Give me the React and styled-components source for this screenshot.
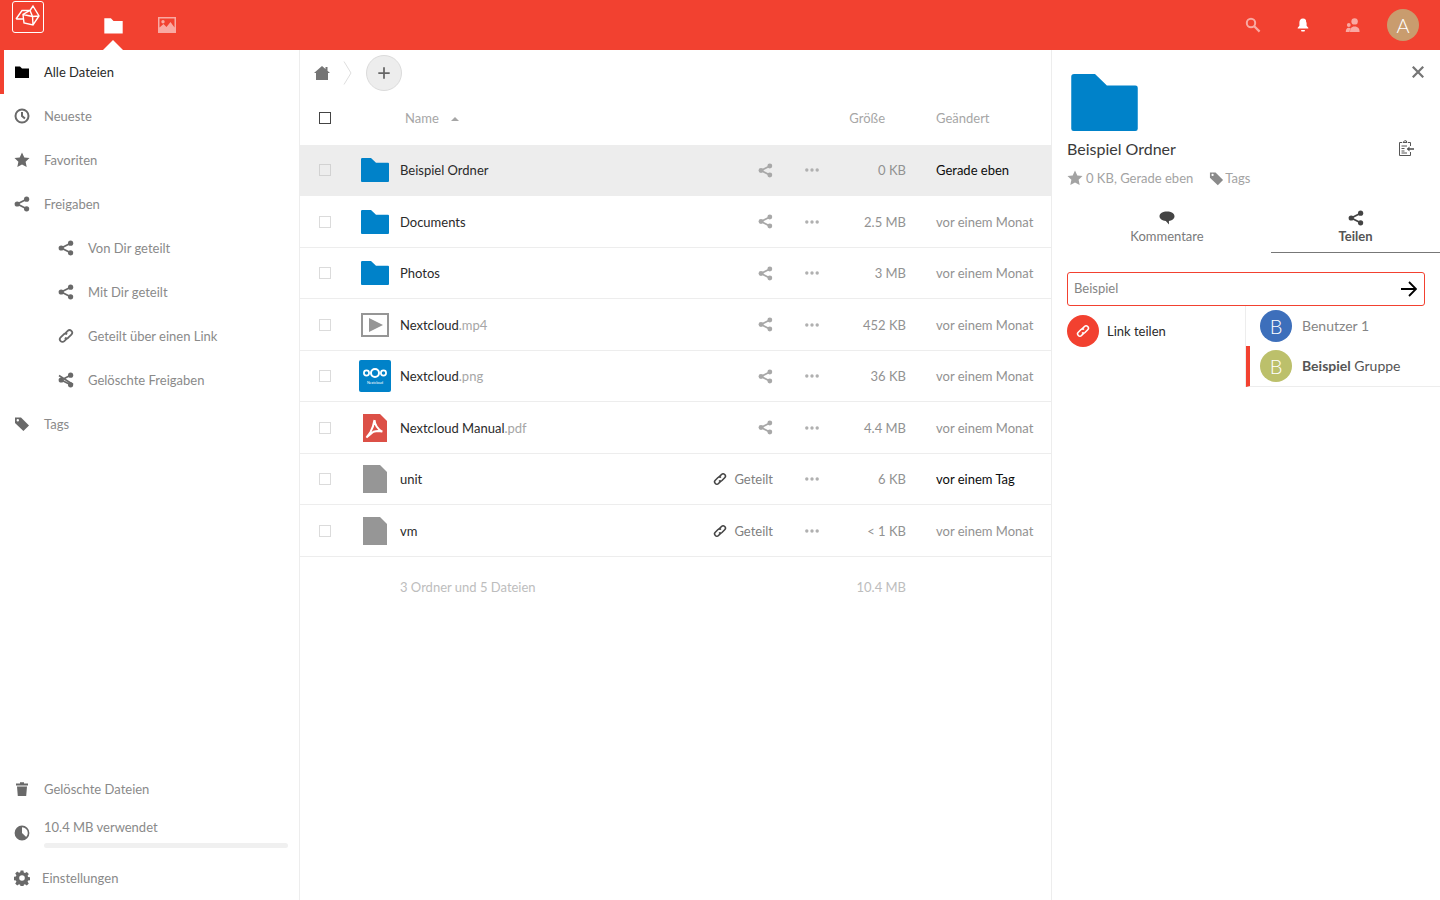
import React from "react";
import styled, { createGlobalStyle } from "styled-components";

const RED = "#f24130";

const Global = createGlobalStyle`
  html, body {
    margin: 0;
    padding: 0;
    background: #fff;
  }
  body {
    font-family: "Lato", "Noto Sans", sans-serif;
    font-size: 13px;
    color: #2a2a2a;
  }
  * {
    box-sizing: border-box;
  }
`;

const Page = styled.div`
  width: 1440px;
  height: 900px;
  display: flex;
  flex-direction: column;
  overflow: hidden;
`;

/* header */
const Header = styled.header`
  height: 50px;
  flex: none;
  background: ${RED};
  display: flex;
  align-items: flex-start;
  padding-left: 12px;
`;
const Logo = styled.div`
  width: 32px;
  height: 32px;
  margin-top: 1px;
  border: 1px solid #fff;
  border-radius: 3px;
  color: #fff;
  display: flex;
`;
const AppNav = styled.nav`
  display: flex;
  margin-left: 44px;
  gap: 4px;
`;
const AppLink = styled.div`
  position: relative;
  width: 50px;
  height: 50px;
  display: flex;
  align-items: center;
  justify-content: center;
  color: #fff;
  opacity: ${(p) => (p.$active ? 1 : 0.55)};
  ${(p) =>
    p.$active &&
    `&:after {
      content: "";
      position: absolute;
      left: 15px;
      bottom: 0;
      border: 10px solid transparent;
      border-top: 0;
      border-bottom-color: #fff;
    }`}
`;
const HeaderRight = styled.div`
  margin-left: auto;
  display: flex;
  align-items: center;
  height: 50px;
  padding-right: 21px;
`;
const HeaderIcon = styled.div`
  position: relative;
  width: 50px;
  display: flex;
  justify-content: center;
  color: #fff;
  opacity: ${(p) => (p.$dim ? 0.55 : 1)};
`;
const BellDot = styled.span`
  position: absolute;
  top: 1px;
  left: 28px;
  width: 5px;
  height: 5px;
  border-radius: 50%;
  background: ${RED};
`;
const Avatar = styled.div`
  width: 32px;
  height: 32px;
  flex: none;
  border-radius: 50%;
  background: ${(p) => p.$bg};
  color: #fff;
  font-size: 20px;
  font-weight: 300;
  display: flex;
  align-items: center;
  justify-content: center;
`;
const HeaderAvatar = styled(Avatar)`
  margin-left: 9px;
`;

/* layout */
const Body = styled.div`
  flex: 1;
  display: flex;
  min-height: 0;
`;

/* sidebar */
const Sidebar = styled.aside`
  width: 300px;
  flex: none;
  border-right: 1px solid #ededed;
  display: flex;
  flex-direction: column;
  justify-content: space-between;
`;
const NavList = styled.div`
  display: flex;
  flex-direction: column;
`;
const NavItem = styled.div`
  height: 44px;
  display: flex;
  align-items: center;
  padding-left: ${(p) => (p.$active ? 10 : p.$sub ? 58 : 14)}px;
  gap: 14px;
  color: ${(p) => (p.$active ? "#2a2a2a" : "#8a8a8a")};
  border-left: ${(p) => (p.$active ? `4px solid ${RED}` : "0")};
`;
const NavLabel = styled.span`
  padding-bottom: 1px;
`;
const NavIcon = styled.span`
  width: 16px;
  height: 16px;
  flex: none;
  display: flex;
  color: ${(p) => (p.$active ? "#000" : "#696969")};
`;
const SideFooter = styled.div`
  display: flex;
  flex-direction: column;
`;
const StorageRow = styled.div`
  display: flex;
  align-items: center;
  gap: 14px;
  padding: 0 11px 0 14px;
  height: 44px;
`;
const StorageText = styled.div`
  flex: 1;
  color: #8a8a8a;
  display: flex;
  flex-direction: column;
  gap: 8px;
`;
const Progress = styled.div`
  height: 5px;
  background: #f0f0f0;
  border-radius: 3px;
`;
const SettingsItem = styled(NavItem)`
  gap: 12px;
  height: 45px;
`;

/* files */
const Main = styled.main`
  flex: 1;
  min-width: 0;
  display: flex;
  flex-direction: column;
`;
const Crumbs = styled.div`
  height: 46px;
  flex: none;
  display: flex;
  align-items: center;
  padding-left: 14px;
  color: #757575;
`;
const CrumbSep = styled.span`
  display: flex;
  margin-left: 13px;
  margin-right: 14px;
`;
const AddButton = styled.div`
  width: 36px;
  height: 36px;
  border-radius: 50%;
  background: #ededed;
  border: 1px solid #dbdbdb;
  color: #666;
  display: flex;
  align-items: center;
  justify-content: center;
`;
const Grid = styled.div`
  display: grid;
  grid-template-columns: 50px 50px 1fr 89px 46px 71px 145px;
  align-items: center;
`;
const TableHead = styled(Grid)`
  height: 48.5px;
  flex: none;
  color: #a6a6a6;
  padding-bottom: 4px;
`;
const HeadName = styled.div`
  padding-left: 5px;
  display: flex;
  align-items: center;
  gap: 12px;
`;
const SortArrow = styled.span`
  width: 0;
  height: 0;
  margin-top: 2px;
  border: 4px solid transparent;
  border-top: 0;
  border-bottom: 4px solid #a6a6a6;
`;
const HeadSize = styled.div`
  grid-column: 5 / span 2;
  padding-right: 21px;
  text-align: right;
`;
const HeadDate = styled.div`
  padding-left: 30px;
`;
const Check = styled.span`
  justify-self: center;
  width: 12px;
  height: 12px;
  border: 1px solid ${(p) => (p.$dark ? "#444" : p.$sel ? "#d2d2d2" : "#dbdbdb")};
  background: ${(p) => (p.$sel ? "#ededed" : "#fff")};
`;
const Row = styled(Grid)`
  height: 51.5px;
  padding-top: 1px;
  border-bottom: 1px solid #ededed;
  background: ${(p) => (p.$selected ? "#ededed" : "#fff")};
`;
const FileIcon = styled.span`
  justify-self: center;
  display: flex;
`;
const FileName = styled.div`
  color: #2a2a2a;
`;
const Ext = styled.span`
  color: #a6a6a6;
`;
const ShareCell = styled.div`
  display: flex;
  justify-content: flex-end;
  align-items: center;
  padding-right: 16px;
  color: #a8a8a8;
`;
const SharedLabel = styled.div`
  display: flex;
  align-items: center;
  gap: 7px;
  color: #808080;
`;
const LinkGlyph = styled.span`
  display: flex;
  color: #444;
`;
const DotsCell = styled.div`
  display: flex;
  justify-content: center;
  color: #b0b0b0;
`;
const SizeCell = styled.div`
  text-align: right;
  color: #929292;
`;
const DateCell = styled.div`
  padding-left: 30px;
  white-space: nowrap;
  color: ${(p) => (p.$recent ? "#0c0c0c" : "#929292")};
`;
const Summary = styled(Grid)`
  height: 60px;
  color: #bdbdbd;
`;
const SummaryName = styled.div`
  grid-column: 3 / span 3;
`;
const SummarySize = styled.div`
  text-align: right;
`;

/* details panel */
const Detail = styled.section`
  width: 389px;
  flex: none;
  border-left: 1px solid #ededed;
  display: flex;
  flex-direction: column;
  position: relative;
`;
const CloseButton = styled.div`
  position: absolute;
  top: 16px;
  right: 16px;
  display: flex;
  color: #757575;
`;
const DetailHead = styled.div`
  padding: 24px 15px 0;
  display: flex;
  flex-direction: column;
`;
const BigFolder = styled.div`
  display: flex;
  padding-left: 4px;
  height: 60px;
`;
const TitleRow = styled.div`
  display: flex;
  align-items: center;
  justify-content: space-between;
  margin-top: 4px;
  height: 20px;
  font-size: 16px;
  color: #3a3a3a;
  padding-right: 11px;
`;
const ClipIcon = styled.span`
  display: flex;
  margin-top: -1px;
  color: #555;
`;
const MetaRow = styled.div`
  display: flex;
  align-items: center;
  height: 20px;
  margin-top: 10px;
  color: #a3a3a3;
`;
const MetaText = styled.span`
  margin-left: 3px;
`;
const MetaTag = styled.span`
  display: flex;
  margin-left: 16px;
  margin-right: 1px;
  color: #8a8a8a;
`;
const MetaStar = styled.span`
  display: flex;
  color: #a3a3a3;
`;
const Tabs = styled.div`
  display: flex;
  margin: 21px 0 0 11px;
  height: 44px;
`;
const Tab = styled.div`
  flex: ${(p) => (p.$active ? "0 0 169px" : "0 0 208px")};
  display: flex;
  flex-direction: column;
  align-items: center;
  gap: 2px;
  padding-top: 1px;
  color: ${(p) => (p.$active ? "#555" : "#7a7a7a")};
  font-weight: ${(p) => (p.$active ? 700 : 400)};
  border-bottom: ${(p) => (p.$active ? "1px solid #777" : "0")};
`;
const TabIcon = styled.span`
  display: flex;
  color: #444;
`;
const SearchBox = styled.div`
  margin: 19px 15px 0;
  height: 34px;
  flex: none;
  border: 1px solid ${RED};
  border-radius: 3px;
  display: flex;
  align-items: center;
  justify-content: space-between;
  padding: 0 7px 0 6px;
  color: #858585;
`;
const SearchText = styled.span`
  padding-bottom: 2px;
`;
const ArrowIcon = styled.span`
  display: flex;
  color: #000;
`;
const ShareArea = styled.div`
  display: flex;
  align-items: flex-start;
`;
const LinkShare = styled.div`
  width: 193px;
  flex: none;
  padding: 9px 0 0 15px;
  display: flex;
  align-items: center;
  gap: 8px;
  color: #2a2a2a;
`;
const Suggest = styled.div`
  flex: 1;
  display: flex;
  flex-direction: column;
  border-left: 1px solid #ededed;
`;
const SuggestItem = styled.div`
  height: ${(p) => (p.$active ? 41 : 40)}px;
  display: flex;
  align-items: center;
  padding-left: ${(p) => (p.$active ? 10 : 14)}px;
  gap: 10px;
  font-size: 14px;
  color: ${(p) => (p.$active ? "#555" : "#858585")};
  border-left: ${(p) => (p.$active ? `4px solid ${RED}` : "0")};
  border-bottom: ${(p) => (p.$active ? "1px solid #ededed" : "0")};
`;
const SuggestText = styled.span`
  padding-bottom: 2px;
`;
const Bold = styled.b`
  font-weight: 700;
`;

/* icons */
const Svg = ({ size = 16, h, children }) => (
  <svg width={size} height={h || size} viewBox="0 0 16 16" fill="currentColor">
    {children}
  </svg>
);
const FolderIcon = ({ size, h }) => (
  <Svg size={size} h={h}>
    <path d="M1 2.500h5l2 2h7v9.500H1z" />
  </Svg>
);
const ClockIcon = () => (
  <Svg>
    <path
      fillRule="evenodd"
      d="M8 .5a7.500 7.500 0 1 0 0 15a7.500 7.500 0 0 0 0-15zM8 2.500a5.500 5.500 0 1 1 0 11a5.500 5.500 0 0 1 0-11z"
    />
    <path d="M7 4h2v3.600l2.600 2.200-1.300 1.400L7 8.600z" />
  </Svg>
);
const StarIcon = ({ size }) => (
  <Svg size={size}>
    <path d="M8 .5l2.300 5 5.200.6-3.900 3.600 1.100 5.400L8 12.400l-4.700 2.700 1.100-5.400L.5 6.100l5.200-.6z" />
  </Svg>
);
const ShareIcon = ({ size }) => (
  <Svg size={size}>
    <circle cx="12.600" cy="3.200" r="2.600" />
    <circle cx="3.200" cy="8" r="2.600" />
    <circle cx="12.600" cy="12.800" r="2.600" />
    <path d="M3.200 8l9.400-4.800M3.200 8l9.400 4.800" stroke="currentColor" strokeWidth="1.800" fill="none" />
  </Svg>
);
const LinkIcon = ({ size, stroke = 1.8 }) => (
  <Svg size={size}>
    <g fill="none" stroke="currentColor" strokeWidth={stroke} transform="rotate(-45 8 8)">
      <path d="M7 10.400H3.200a2.600 2.600 0 0 1 0-5.200h4.400a2.600 2.600 0 0 1 2.400 2.400" />
      <path d="M9 5.600h3.800a2.600 2.600 0 0 1 0 5.200H8.400a2.600 2.600 0 0 1-2.400-2.400" />
    </g>
  </Svg>
);
const DeletedShareIcon = () => (
  <Svg>
    <circle cx="12.600" cy="3.200" r="2.600" />
    <circle cx="3.200" cy="8" r="2.600" />
    <circle cx="12.600" cy="12.800" r="2.600" />
    <path d="M3.200 8l9.400-4.800M3.200 8l9.400 4.800M1 3.500l14 9" stroke="currentColor" strokeWidth="1.600" fill="none" />
  </Svg>
);
const TagIcon = ({ size }) => (
  <Svg size={size}>
    <path
      fillRule="evenodd"
      d="M1 1.500h6l8 8-5.600 5.600-8.400-8zM3.800 3a1.200 1.200 0 1 0 0 2.400a1.200 1.200 0 0 0 0-2.400z"
    />
  </Svg>
);
const TrashIcon = () => (
  <Svg>
    <path d="M2 2.500h4V1.300h4v1.200h4v2H2zM3 5.500h10l-.8 9.500H3.800z" />
  </Svg>
);
const PieIcon = () => (
  <Svg>
    <circle cx="8" cy="8" r="6.600" fill="none" stroke="currentColor" strokeWidth="1.600" />
    <path d="M8 1.400a6.600 6.600 0 0 0-4.700 11.200A6.600 6.600 0 0 0 12.700 12.600L8 8z" />
  </Svg>
);
const GearIcon = () => (
  <Svg>
    <path
      fillRule="evenodd"
      d="M6.600.5h2.800l.4 2.100 1.200.5 1.800-1.200 2 2-1.200 1.800.5 1.200 2.100.4v2.800l-2.100.4-.5 1.200 1.200 1.800-2 2-1.800-1.200-1.200.5-.4 2.100H6.600l-.4-2.100-1.200-.5-1.800 1.200-2-2 1.200-1.800-.5-1.200-2.100-.4V6.900l2.100-.4.5-1.200-1.200-1.800 2-2 1.800 1.200 1.200-.5zM8 5.200a2.800 2.800 0 1 0 0 5.600a2.800 2.800 0 0 0 0-5.600z"
    />
  </Svg>
);
const DotsIcon = () => (
  <Svg>
    <circle cx="2.800" cy="8" r="1.700" />
    <circle cx="8" cy="8" r="1.700" />
    <circle cx="13.200" cy="8" r="1.700" />
  </Svg>
);
const LogoMark = () => (
  <svg width="30" height="30" viewBox="0 0 30 30" fill="none" stroke="currentColor" strokeWidth="1.400">
    <path d="M3 17 L9 8.500 H17 M3 17 H10 M17 8.500 L20 4 L26 14 L20 23 L11 21 L10 12.500 L17 8.500 L19.500 14.500 L20 23 M10 12.500 L19.500 14.500 L26 14" />
  </svg>
);
const ImageIcon = () => (
  <svg width="18" height="16" viewBox="0 0 18 16" fill="currentColor">
    <path
      fillRule="evenodd"
      d="M0 0h18v16H0zM1.500 1.500v9l4-3.500 3 3 4-5 4 5.500V1.500zM5 3a1.700 1.700 0 1 1 0 3.400A1.700 1.700 0 0 1 5 3z"
    />
  </svg>
);
const SearchIcon = () => (
  <Svg>
    <circle cx="6" cy="6" r="4.200" fill="none" stroke="currentColor" strokeWidth="2" />
    <path d="M9 9l5.600 5.600" stroke="currentColor" strokeWidth="2.200" />
  </Svg>
);
const BellIcon = () => (
  <Svg>
    <path d="M8 1.500c2.500 0 3.600 2 3.600 4v3.300l1.700 2v.7H2.700v-.7l1.700-2V5.500c0-2 1.100-4 3.600-4zM6 13h4l-.5 1.500h-3z" />
  </Svg>
);
const ContactsIcon = () => (
  <Svg>
    <circle cx="9.600" cy="4.400" r="3.200" />
    <path d="M5 15c0-3.400 1-5.600 4.600-5.600s5 2.200 5 5.600z" />
    <circle cx="3.800" cy="8" r="1.900" />
    <path d="M.8 15c0-2.400.8-4.200 3-4.200 1 0 1.600.3 1.900.8-.7 1-1 2-1.100 3.400z" />
  </Svg>
);
const HomeIcon = () => (
  <Svg>
    <path d="M8 1l3.500 3V2h2v3.700L16 8h-2v7H2V8H0z" />
  </Svg>
);
const PlusIcon = () => (
  <Svg size={14}>
    <path d="M7 1.500h2v5.500h5.500v2H9v5.500H7V9H1.500V7H7z" />
  </Svg>
);
const ChevronSep = () => (
  <svg width="9" height="24" viewBox="0 0 9 24" fill="none" stroke="#dedede">
    <path d="M1 .5 L8 12 L1 23.500" />
  </svg>
);
const CloseIcon = () => (
  <Svg size={12}>
    <path d="M1 1l14 14M15 1L1 15" stroke="currentColor" strokeWidth="3" />
  </Svg>
);
const ClipboardIcon = () => (
  <svg width="16" height="16" viewBox="0 0 16 16" fill="none" stroke="currentColor">
    <path d="M4 2.500H1.500v13h11V12M10 2.500h2.500V6M5 2.500L6.500 .8 8.200 .8 9 2.500z" />
    <path d="M3.500 6H9M3.500 8.500H6.500M3.500 11H6.500M3.500 13H9" />
    <path d="M16 9H9.500" strokeWidth="1.600" />
    <path d="M11.500 6.500L8.800 9l2.700 2.500z" fill="currentColor" stroke="none" />
  </svg>
);
const BubbleIcon = () => (
  <Svg>
    <path d="M8 1.500c4.200 0 7.500 2 7.500 4.800 0 2.600-2.600 4.400-5.600 4.700l.1 3.500-3.200-3.600C3.400 10.700.5 9 .5 6.300.5 3.500 3.800 1.500 8 1.500z" />
  </Svg>
);
const ArrowRight = () => (
  <svg width="16" height="16" viewBox="0 0 16 16" fill="none" stroke="currentColor" strokeWidth="1.800">
    <path d="M0 8h15M8 1l7 7-7 7" />
  </svg>
);
const BlueFolder = ({ width = 28, height = 24 }) => (
  <svg width={width} height={height} viewBox="0 0 28 24">
    <path d="M0 1.200A1.200 1.200 0 0 1 1.200 0H10l5 4.800h12a1 1 0 0 1 1 1V23a1 1 0 0 1-1 1H1a1 1 0 0 1-1-1z" fill="#0082c9" />
  </svg>
);
const VideoIcon = () => (
  <svg width="28" height="24" viewBox="0 0 28 24">
    <rect x="1" y="1" width="26" height="22" fill="#fff" stroke="#969696" strokeWidth="2" />
    <path d="M8 5 L22 12 L8 19z" fill="#969696" />
  </svg>
);
const NextcloudThumb = () => (
  <svg width="32" height="32" viewBox="0 0 32 32">
    <rect width="32" height="32" rx="2" fill="#0082c9" />
    <g fill="none" stroke="#fff">
      <circle cx="16" cy="13" r="4" strokeWidth="2" />
      <circle cx="7.500" cy="13" r="2.600" strokeWidth="1.700" />
      <circle cx="24.500" cy="13" r="2.600" strokeWidth="1.700" />
    </g>
    <text x="16" y="23.500" fontSize="3.600" fill="#fff" textAnchor="middle">
      Nextcloud
    </text>
  </svg>
);
const PdfIcon = () => (
  <svg width="24" height="28" viewBox="0 0 24 28">
    <path d="M0 0h17l7 7v21H0z" fill="#dc5047" />
    <path
      d="M11.500 6c-.6 3.500-1.400 7.500-4 12-1.500 2.400-2.700 3.800-4 5.500 3-2.200 4.700-4.200 7-5.800 3-.9 6-1 9-.2M11.500 6c.4 4.500 2.500 8.500 7.500 11.500-3.500-1-6.500-.5-8.500 .2"
      fill="none"
      stroke="#fff"
      strokeWidth="2"
    />
  </svg>
);
const PlainFile = () => (
  <svg width="24" height="28" viewBox="0 0 24 28">
    <path d="M0 0h17l7 7v21H0z" fill="#969696" />
  </svg>
);

const navTop = [
  { label: "Alle Dateien", icon: <FolderIcon />, active: true },
  { label: "Neueste", icon: <ClockIcon /> },
  { label: "Favoriten", icon: <StarIcon /> },
  { label: "Freigaben", icon: <ShareIcon /> },
  { label: "Von Dir geteilt", icon: <ShareIcon />, sub: true },
  { label: "Mit Dir geteilt", icon: <ShareIcon />, sub: true },
  { label: "Geteilt über einen Link", icon: <LinkIcon />, sub: true },
  { label: "Gelöschte Freigaben", icon: <DeletedShareIcon />, sub: true },
  { label: "Tags", icon: <TagIcon /> },
];

const files = [
  { name: "Beispiel Ordner", icon: <BlueFolder />, size: "0 KB", date: "Gerade eben", recent: true, selected: true },
  { name: "Documents", icon: <BlueFolder />, size: "2.5 MB", date: "vor einem Monat" },
  { name: "Photos", icon: <BlueFolder />, size: "3 MB", date: "vor einem Monat" },
  { name: "Nextcloud", ext: ".mp4", icon: <VideoIcon />, size: "452 KB", date: "vor einem Monat" },
  { name: "Nextcloud", ext: ".png", icon: <NextcloudThumb />, size: "36 KB", date: "vor einem Monat" },
  { name: "Nextcloud Manual", ext: ".pdf", icon: <PdfIcon />, size: "4.4 MB", date: "vor einem Monat" },
  { name: "unit", icon: <PlainFile />, size: "6 KB", date: "vor einem Tag", recent: true, shared: true },
  { name: "vm", icon: <PlainFile />, size: "< 1 KB", date: "vor einem Monat", shared: true },
];

export default function App() {
  return (
    <Page>
      <Global />
      <Header>
        <Logo>
          <LogoMark />
        </Logo>
        <AppNav>
          <AppLink $active>
            <FolderIcon size={21} />
          </AppLink>
          <AppLink>
            <ImageIcon />
          </AppLink>
        </AppNav>
        <HeaderRight>
          <HeaderIcon $dim>
            <SearchIcon />
          </HeaderIcon>
          <HeaderIcon>
            <BellIcon />
            <BellDot />
          </HeaderIcon>
          <HeaderIcon $dim>
            <ContactsIcon />
          </HeaderIcon>
          <HeaderAvatar $bg="#c99c6e">A</HeaderAvatar>
        </HeaderRight>
      </Header>
      <Body>
        <Sidebar>
          <NavList>
            {navTop.map((item) => (
              <NavItem key={item.label} $active={item.active} $sub={item.sub}>
                <NavIcon $active={item.active}>{item.icon}</NavIcon>
                <NavLabel>{item.label}</NavLabel>
              </NavItem>
            ))}
          </NavList>
          <SideFooter>
            <NavItem>
              <NavIcon>
                <TrashIcon />
              </NavIcon>
              Gelöschte Dateien
            </NavItem>
            <StorageRow>
              <NavIcon>
                <PieIcon />
              </NavIcon>
              <StorageText>
                10.4 MB verwendet
                <Progress />
              </StorageText>
            </StorageRow>
            <SettingsItem>
              <NavIcon>
                <GearIcon />
              </NavIcon>
              Einstellungen
            </SettingsItem>
          </SideFooter>
        </Sidebar>

        <Main>
          <Crumbs>
            <HomeIcon />
            <CrumbSep>
              <ChevronSep />
            </CrumbSep>
            <AddButton>
              <PlusIcon />
            </AddButton>
          </Crumbs>
          <TableHead>
            <Check $dark />
            <span />
            <HeadName>
              Name
              <SortArrow />
            </HeadName>
            <HeadSize>Größe</HeadSize>
            <HeadDate>Geändert</HeadDate>
          </TableHead>
          {files.map((f) => (
            <Row key={f.name + (f.ext || "")} $selected={f.selected}>
              <Check $sel={f.selected} />
              <FileIcon>{f.icon}</FileIcon>
              <FileName>
                {f.name}
                {f.ext && <Ext>{f.ext}</Ext>}
              </FileName>
              <ShareCell>
                {f.shared ? (
                  <SharedLabel>
                    <LinkGlyph>
                      <LinkIcon size={14} />
                    </LinkGlyph>
                    Geteilt
                  </SharedLabel>
                ) : (
                  <ShareIcon size={15} />
                )}
              </ShareCell>
              <DotsCell>
                <DotsIcon />
              </DotsCell>
              <SizeCell>{f.size}</SizeCell>
              <DateCell $recent={f.recent}>{f.date}</DateCell>
            </Row>
          ))}
          <Summary>
            <span />
            <span />
            <SummaryName>3 Ordner und 5 Dateien</SummaryName>
            <SummarySize>10.4 MB</SummarySize>
          </Summary>
        </Main>

        <Detail>
          <CloseButton>
            <CloseIcon />
          </CloseButton>
          <DetailHead>
            <BigFolder>
              <BlueFolder width={67} height={57} />
            </BigFolder>
            <TitleRow>
              Beispiel Ordner
              <ClipIcon>
                <ClipboardIcon />
              </ClipIcon>
            </TitleRow>
            <MetaRow>
              <MetaStar>
                <StarIcon />
              </MetaStar>
              <MetaText>0 KB, Gerade eben</MetaText>
              <MetaTag>
                <TagIcon size={15} />
              </MetaTag>
              Tags
            </MetaRow>
          </DetailHead>
          <Tabs>
            <Tab>
              <TabIcon>
                <BubbleIcon />
              </TabIcon>
              Kommentare
            </Tab>
            <Tab $active>
              <TabIcon>
                <ShareIcon />
              </TabIcon>
              Teilen
            </Tab>
          </Tabs>
          <SearchBox>
            <SearchText>Beispiel</SearchText>
            <ArrowIcon>
              <ArrowRight />
            </ArrowIcon>
          </SearchBox>
          <ShareArea>
            <LinkShare>
              <Avatar $bg={RED}>
                <LinkIcon size={14} />
              </Avatar>
              Link teilen
            </LinkShare>
            <Suggest>
              <SuggestItem>
                <Avatar $bg="#3d6fbb">B</Avatar>
                <SuggestText>Benutzer 1</SuggestText>
              </SuggestItem>
              <SuggestItem $active>
                <Avatar $bg="#bcc06b">B</Avatar>
                <SuggestText>
                  <Bold>Beispiel</Bold> Gruppe
                </SuggestText>
              </SuggestItem>
            </Suggest>
          </ShareArea>
        </Detail>
      </Body>
    </Page>
  );
}
